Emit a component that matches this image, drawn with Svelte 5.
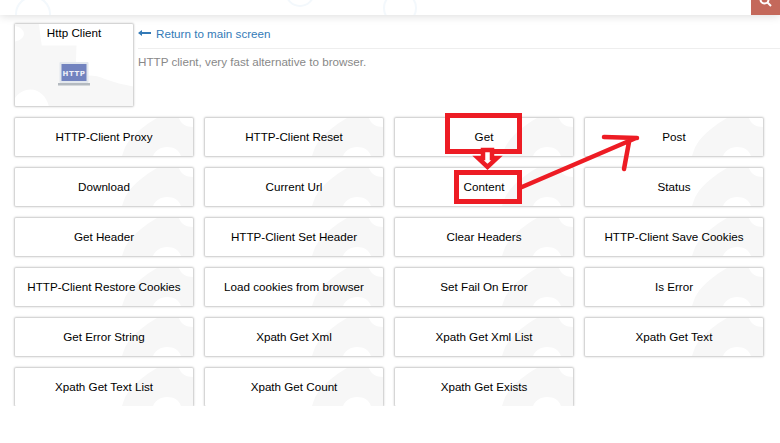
<script lang="ts">
    const actions: string[] = [
        'HTTP-Client Proxy', 'HTTP-Client Reset', 'Get', 'Post',
        'Download', 'Current Url', 'Content', 'Status',
        'Get Header', 'HTTP-Client Set Header', 'Clear Headers', 'HTTP-Client Save Cookies',
        'HTTP-Client Restore Cookies', 'Load cookies from browser', 'Set Fail On Error', 'Is Error',
        'Get Error String', 'Xpath Get Xml', 'Xpath Get Xml List', 'Xpath Get Text',
        'Xpath Get Text List', 'Xpath Get Count', 'Xpath Get Exists'
    ];
</script>

<header class="topbar">
    <svg class="rings" viewBox="0 0 780 15" aria-hidden="true">
        <circle cx="33" cy="14" r="17" />
        <circle cx="300" cy="-8" r="14" />
        <circle cx="400" cy="8" r="16" />
    </svg>
    <button class="search" aria-label="Search">
        <svg viewBox="0 0 14 10" width="14" height="10">
            <circle cx="5.5" cy="-0.5" r="4" />
            <path d="M8.5 2.5 L12 6" />
        </svg>
    </button>
</header>

<main class="page">
    <section class="hero">
        <div class="card">
            <svg class="blob" viewBox="0 0 119 84" preserveAspectRatio="none" aria-hidden="true">
                <path d="M0 0H24L27 22H62L61 57C70 51 80 52 90 56C100 60 110 62 119 64V84H34C32 74 24 67 16 67C8 67 2 72 0 76V18C5 17 9 14 9 10C9 6 5 3 0 2Z" />
            </svg>
            <span class="card-title">Http Client</span>
            <svg class="laptop" viewBox="0 0 32 24" width="32" height="24" aria-hidden="true">
                <rect x="1.5" y="0" width="29" height="21" rx="1" fill="#e3e8ee" />
                <rect x="3.5" y="2" width="25" height="17" fill="#7283bf" />
                <rect x="0" y="21" width="32" height="2.5" fill="#b4bac0" />
                <text x="16" y="13.5" text-anchor="middle">HTTP</text>
            </svg>
        </div>
        <div class="intro">
            <a class="back" href="#main">
                <svg viewBox="0 0 13 8" width="13" height="8" aria-hidden="true">
                    <path d="M0 4 L4 1 V3 H13 V5 H4 V7 Z" />
                </svg>
                Return to main screen
            </a>
            <p class="desc">HTTP client, very fast alternative to browser.</p>
        </div>
    </section>

    <section class="grid">
        {#each actions as label}
            <button class="action">
                <svg class="blob" viewBox="0 0 178 38" preserveAspectRatio="none" aria-hidden="true">
                    <path d="M142 0H164C166 6 171 9 178 9V38H166C164 32 159 29 152 29C145 29 140 33 138 38H107C109 32 110 29 112 26C118 16 130 7 142 0Z" />
                </svg>
                <span>{label}</span>
            </button>
        {/each}
    </section>
</main>

<svg class="marks" viewBox="0 0 780 443" aria-hidden="true">
    <rect x="447.5" y="115.5" width="72" height="36" />
    <rect x="456.5" y="172.5" width="63" height="29" />
    <path class="hollow" d="M483 150 H492 V158 H497 L487.5 167 L478 158 H483 Z" />
    <path d="M522 187 L636 138 M604 137 L637 138 M629 142 L624 169" />
</svg>

<style>
    :global(body) {
        background: #fff;
        font-family: "Liberation Sans", Arial, sans-serif;
        font-size: 11.65px;
        overflow: hidden;
    }

    .topbar {
        position: relative;
        height: 15px;
        background: #fff;
        box-shadow: 0 1px 10px rgba(0, 0, 0, 0.14);
        display: flex;
        justify-content: flex-end;
    }

    .rings {
        position: absolute;
        inset: 0;
        width: 100%;
        height: 100%;
    }

    .rings circle {
        fill: none;
        stroke: #f3f8fc;
        stroke-width: 2;
    }

    .search {
        position: relative;
        width: 29px;
        height: 15px;
        padding: 0;
        border: 0;
        background: #c4695b;
        display: flex;
        justify-content: center;
        align-items: flex-start;
    }

    .search svg {
        fill: none;
        stroke: #fff;
        stroke-width: 2;
    }

    .page {
        padding: 9px 0 0 15px;
    }

    .hero {
        display: flex;
        gap: 5px;
    }

    .card {
        position: relative;
        width: 118px;
        height: 82px;
        background: #fff;
        box-shadow: 0 0 2px 1px rgba(0, 0, 0, 0.22);
        border-radius: 1px;
        display: flex;
        flex-direction: column;
        align-items: center;
        overflow: hidden;
    }

    .blob {
        position: absolute;
        inset: 0;
        width: 100%;
        height: 100%;
    }

    .blob path {
        fill: #f7f7f7;
    }

    .card-title {
        position: relative;
        margin-top: 2px;
        color: #000;
        line-height: 14px;
    }

    .laptop {
        position: relative;
        margin-top: 22px;
    }

    .laptop text {
        font-family: "DejaVu Sans", sans-serif;
        font-size: 7px;
        font-weight: 700;
        letter-spacing: 0.6px;
        fill: #eef0f8;
    }

    .intro {
        flex: 1;
    }

    .back {
        box-sizing: border-box;
        height: 25px;
        padding-bottom: 6px;
        display: flex;
        align-items: center;
        gap: 5px;
        color: #337ab7;
        text-decoration: none;
        border-bottom: 1px solid #eee;
    }

    .back svg {
        fill: #337ab7;
    }

    .desc {
        margin: 6px 0 0;
        color: #888;
        line-height: 14px;
    }

    .grid {
        display: grid;
        grid-template-columns: repeat(4, 178px);
        grid-auto-rows: 38px;
        gap: 12px;
        margin-top: 12px;
    }

    .action {
        position: relative;
        padding: 0 0 2px;
        border: 0;
        border-radius: 1px;
        background: #fff;
        box-shadow: 0 0 2px 1px rgba(0, 0, 0, 0.22);
        font: inherit;
        color: #000;
        overflow: hidden;
    }

    .action span {
        position: relative;
    }

    .marks {
        position: absolute;
        top: 0;
        left: 0;
        width: 780px;
        height: 443px;
        pointer-events: none;
        fill: none;
        stroke: #ed1c24;
        stroke-width: 5;
    }

    .marks path {
        stroke-width: 4.5;
        stroke-linecap: round;
    }

    .marks .hollow {
        fill: #fff;
        stroke-linecap: butt;
    }
</style>
